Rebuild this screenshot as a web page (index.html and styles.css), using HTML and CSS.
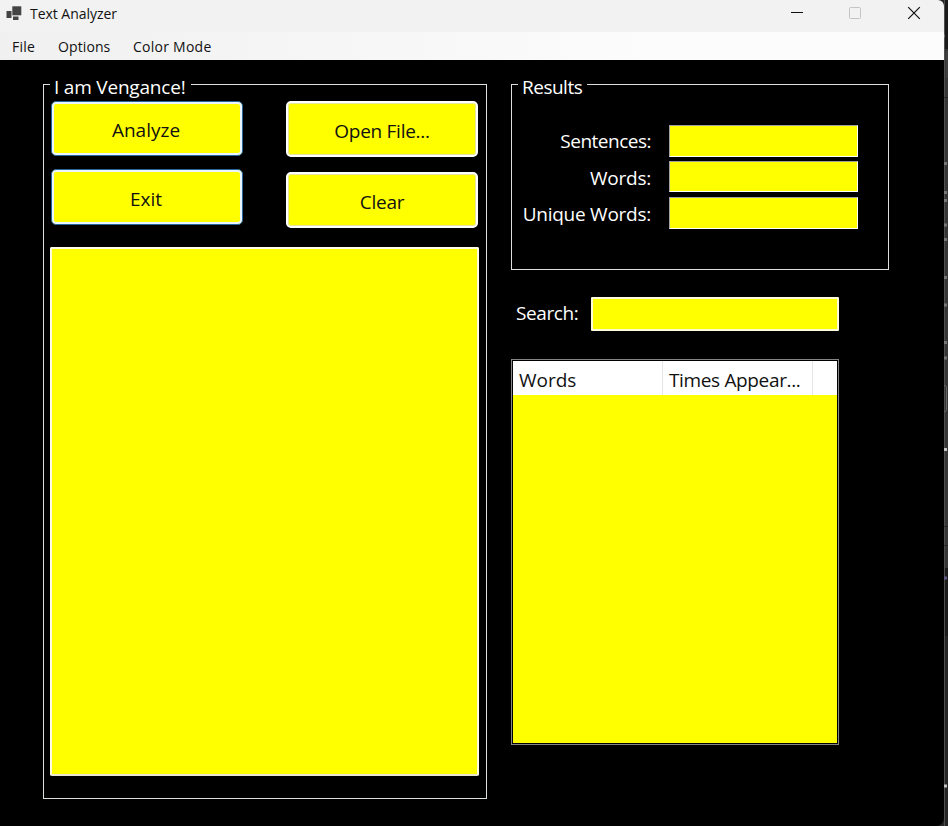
FILE: index.html
```
<!DOCTYPE html>
<html lang="en">
<head>
<meta charset="utf-8">
<title>Text Analyzer</title>
<link rel="stylesheet" href="styles.css">
</head>
<body>
<div class="window">
  <header class="titlebar">
    <svg class="app-icon" width="16" height="16" viewBox="0 0 16 16"><rect x=".5" y="5" width="5" height="7" fill="#444"/><rect x="6.300" y=".3" width="9" height="9" fill="#444"/><rect x="7" y="10.500" width="5.500" height="3.500" fill="#444"/></svg>
    <span class="title">Text Analyzer</span>
    <div class="controls">
      <svg width="14" height="14" viewBox="0 0 14 14"><path d="M1 6.500H13" stroke="#111"/></svg>
      <svg width="14" height="14" viewBox="0 0 14 14"><rect x="1.500" y="1.500" width="11" height="11" rx="1" fill="none" stroke="#c4c4c4"/></svg>
      <svg width="14" height="14" viewBox="0 0 14 14"><path d="M1.200 1.200L12.800 12.800M12.800 1.200L1.200 12.800" stroke="#111" stroke-width="1.200"/></svg>
    </div>
  </header>
  <nav class="menu"><span class="m-file">File</span><span class="m-options">Options</span><span class="m-color">Color Mode</span></nav>
  <main class="content">
    <section class="group input-group">
      <h2 class="legend legend-main">I am Vengance!</h2>
      <div class="buttons">
        <div class="col">
          <button class="btn focus first"><span class="t-analyze">Analyze</span></button>
          <button class="btn focus"><span class="t-exit">Exit</span></button>
        </div>
        <div class="col wide">
          <button class="btn"><span class="t-open">Open File...</span></button>
          <button class="btn"><span class="t-clear">Clear</span></button>
        </div>
      </div>
      <div class="textbox"></div>
    </section>
    <div class="side">
      <section class="group results">
        <h2 class="legend legend-results">Results</h2>
        <div class="row"><span class="t-sent">Sentences:</span><div class="field"></div></div>
        <div class="row short"><span class="t-words">Words:</span><div class="field"></div></div>
        <div class="row last"><span class="t-unique">Unique Words:</span><div class="field"></div></div>
      </section>
      <div class="search"><span class="t-search">Search:</span><div class="search-field"></div></div>
      <div class="list">
        <div class="list-head"><div class="cell"><span class="t-hwords">Words</span></div><div class="cell"><span class="t-times">Times Appear...</span></div></div>
      </div>
    </div>
  </main>
</div>
<svg class="backdrop" width="4" height="826" viewBox="0 0 4 826">
  <rect width="4" height="826" fill="#363636"/><rect width="4" height="49" fill="#1b1b1b"/><rect y="568" width="4" height="68" fill="#1b1b1b"/><rect y="636" width="4" height="190" fill="#252525"/>
  <rect width="1" height="826" fill="#505050"/>
  <path d="M0 97.500H4M0 526.500H4M0 545.500H4" stroke="#282828"/>
  <path d="M3 51V78" stroke="#4a4a4a"/>
  <path d="M0 36H1M0 163.500H3M0 192.500H3M0 200.500H3M0 225H3M0 239.500H3M0 277.500H3M0 305H3M0 342.500H3M0 358H3" stroke="#858585" stroke-width="3" opacity=".8"/>
  <path d="M0 385.500H1.500L2.500 387V410L1.500 411.500H0" fill="none" stroke="#666"/>
  <path d="M0 449.500H3M0 786H3" stroke="#c4c4c4" stroke-width="3"/>
  <path d="M0 578H3" stroke="#625b88" stroke-width="3"/>
</svg>
</body>
</html>
```
FILE: styles.css
```
* { box-sizing: border-box; }
body { margin: 0; display: flex; width: 948px; height: 826px; overflow: hidden; background: #252525; font-family: "Open Sans", "Noto Sans", sans-serif; font-size: 19px; color: #fff; }
span, .legend { white-space: nowrap; }
.window { width: 944px; height: 826px; background: #000; border-radius: 0 6px 8px 0; overflow: hidden; }
.backdrop { display: block; flex: none; }
.titlebar { height: 32px; background: #f2f2f2; color: #111; display: flex; align-items: flex-start; padding: 6px 23px 0 6px; font-size: 14px; }
.app-icon { margin-right: 8px; }
.title { line-height: 16px; letter-spacing: -0.04px; }
.controls { display: flex; gap: 44px; margin-left: auto; }
.controls svg:last-child { margin-left: 1px; }
.menu { height: 28px; background: linear-gradient(90deg, #f0f0f0, #fcfcfc 70%); color: #111; display: flex; gap: 23px; padding-left: 12px; line-height: 29px; font-size: 14px; }
.m-file { width: 23px; letter-spacing: 0.2px; }
.m-options { width: 52px; letter-spacing: 0.1px; }
.m-color { letter-spacing: 0.25px; }
.content { display: flex; gap: 24px; align-items: flex-start; padding: 24px 0 0 43px; }
.group { position: relative; border: 1px solid #dce0dc; }
.input-group { width: 444px; height: 715px; padding: 16px 7px 0 6px; }
.legend { position: absolute; left: 6px; top: -11px; margin: 0; padding-left: 4px; height: 26px; line-height: 26px; font-size: 19px; font-weight: 400; background: #000; }
.legend-main { width: 141px; height: 20px; line-height: 26px; letter-spacing: -0.2px; }
.legend-results { width: 69px; height: 26px; letter-spacing: -0.5px; }
.buttons { display: flex; justify-content: space-between; padding: 0 1px; height: 146px; }
.col { display: flex; flex-direction: column; gap: 13px; width: 192px; }
.col.wide { gap: 15px; }
.btn { display: flex; align-items: center; justify-content: center; width: 192px; height: 56px; padding: 3px 0 0; background: #ff0; border: 2px solid #fff; border-radius: 5px; font: inherit; color: #111; box-shadow: inset 0 0 0 1px #e6e6a0; }
.btn.focus { padding-right: 2px; border: 1px solid #28659f; box-shadow: inset 0 0 0 2px #e9f5ff; }
.btn.first { height: 55px; }
.t-open, .t-clear { letter-spacing: -0.28px; }
.textbox { height: 529px; background: #ff0; border: 2px solid #fffde0; border-bottom-color: #e8e8d0; border-radius: 2px; }
.side { width: 378px; }
.results { height: 186px; padding: 40px 30px 0 10px; }
.row { display: flex; justify-content: space-between; height: 32px; line-height: 33px; margin-bottom: 4px; }
.row > span { width: 129px; text-align: right; letter-spacing: -0.25px; }
.row > .t-sent { letter-spacing: -0.5px; }
.row.short { height: 31px; margin-bottom: 5px; line-height: 35px; }
.row.last { line-height: 35px; }
.field { width: 189px; background: #ff0; border: 1px solid; border-color: #a0a0a0 #fff #fff #a0a0a0; }
.search { display: flex; height: 34px; line-height: 33px; margin-top: 27px; padding-left: 5px; }
.search > span { width: 75px; letter-spacing: -0.4px; }
.search-field { width: 248px; background: #ff0; border: 2px solid #fffdd8; border-radius: 1px; }
.list { width: 328px; height: 386px; margin-top: 28px; background: #ff0; border: 1px solid #858585; box-shadow: inset 0 0 0 1px #000; padding: 1px; }
.list-head { display: flex; height: 34px; background: #fff; color: #111; line-height: 38px; }
.cell { width: 150px; border-right: 1px solid #e5e5e5; padding-left: 6px; }
.t-times { letter-spacing: -0.35px; }
```
